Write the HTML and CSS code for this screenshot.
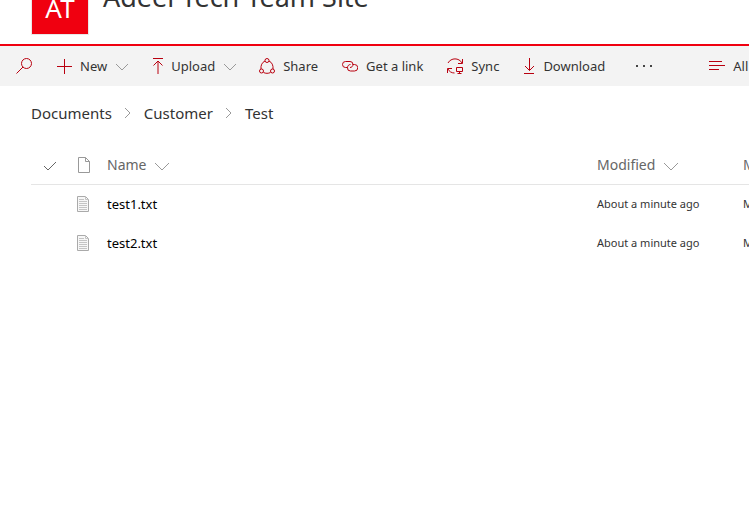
FILE: index.html
```html
<!DOCTYPE html>
<html lang="en">
<head>
<meta charset="utf-8">
<title>Adeel Tech Team Site</title>
<link rel="stylesheet" href="styles.css">
</head>
<body>
<header class="site-header">
  <div class="site-logo">AT</div>
  <h1 class="site-title">Adeel Tech Team Site</h1>
</header>
<nav class="command-bar" aria-label="Commands">
  <button class="command search" aria-label="Search"><svg class="icon" viewBox="0 0 16 16"><circle cx="10.5" cy="5.5" r="5"/><path d="M7 9 .5 15.500"/></svg></button>
  <button class="command new"><svg class="icon" viewBox="0 0 16 16"><path d="M8.500 1v15M1 8.500h15"/></svg>New<svg class="chevron small" viewBox="0 0 14 8"><path d="m1 1 6 6 6-6"/></svg></button>
  <button class="command upload"><svg class="icon arrow" viewBox="0 0 10 16"><path d="M0 .5h10M5 16V3M.5 7.500 5 3l4.500 4.500"/></svg>Upload<svg class="chevron small" viewBox="0 0 14 8"><path d="m1 1 6 6 6-6"/></svg></button>
  <button class="command share"><svg class="icon" viewBox="0 0 16 16"><circle cx="8" cy="2.500" r="2"/><circle cx="2.500" cy="13" r="2"/><circle cx="13.500" cy="13" r="2"/><path d="M6 3C3 4.300 1.600 7.500 2 11M10 3c3 1.300 4.400 4.500 4 8M4.500 14.500c2.200 1.100 4.800 1.100 7 0"/></svg>Share</button>
  <button class="command link"><svg class="icon" viewBox="0 0 16 16"><path d="M5.500 9.500h-2a3 3 0 0 1 0-6H8a3 3 0 0 1 3 3c0 1.700-1.300 3-3 3M10.500 6.500h2a3 3 0 0 1 0 6.500H8.500a3 3 0 0 1-3-3.300c0-1.800 1.200-3.200 3-3.200"/></svg>Get a link</button>
  <button class="command sync"><svg class="icon" viewBox="0 0 16 16"><path d="M1 5C4-.5 12-.5 15 5M15.500 1v4.500H11M.5 15v-4.500H5M1 11c1.200 2.500 3.500 4 6.500 4M9.500 9.500h6v4h-6zM12.500 13.500V15.500M10.500 15.500h4"/></svg>Sync</button>
  <button class="command download"><svg class="icon narrow" viewBox="0 0 12 16"><path d="M1 15.500h10M6.500 0v12.500M2 8l4.500 4.500L11 8"/></svg>Download</button>
  <button class="command more" aria-label="More"><svg class="dots" viewBox="0 0 18 2"><path d="M1 0h2v2H1zM8 0h2v2H8zM15 0h2v2h-2z"/></svg></button>
  <button class="command view"><svg class="icon" viewBox="0 0 16 16"><path d="M0 3.500h13M0 7.500h16M0 11.500h10"/></svg>All</button>
</nav>
<main class="library">
  <nav class="breadcrumb" aria-label="Breadcrumb">
    <a href="#">Documents</a>
    <svg class="crumb-arrow" viewBox="0 0 8 12"><path d="m1 1 5 5-5 5"/></svg>
    <a href="#">Customer</a>
    <svg class="crumb-arrow" viewBox="0 0 8 12"><path d="m1 1 5 5-5 5"/></svg>
    <a href="#">Test</a>
  </nav>
  <table class="files">
    <thead>
      <tr>
        <th class="check"><svg class="tick" viewBox="0 0 14 10"><path d="m1 5 4 4 8-8"/></svg></th>
        <th class="type"><svg class="page" viewBox="0 0 14 18"><path d="M1.500 1.500h7l4 4v11h-11zM8.500 1.500v4h4"/></svg></th>
        <th class="name">Name<svg class="chevron" viewBox="0 0 16 9"><path d="m1 1 7 7 7-7"/></svg></th>
        <th class="modified">Modified<svg class="chevron" viewBox="0 0 16 9"><path d="m1 1 7 7 7-7"/></svg></th>
        <th class="author">M</th>
      </tr>
    </thead>
    <tbody>
      <tr>
        <td></td>
        <td><svg class="text-file" viewBox="0 0 12 16"><path class="sheet" d="M.5.500h8l3 3v12H.5z"/><path class="lines" d="M8.500.5v3h3M2 3.500h5M2 5.500h8M2 7.500h8M2 9.500h8M2 11.500h8M2 13.500h8"/></svg></td>
        <td><a class="file" href="#">test1.txt</a></td>
        <td>About a minute ago</td>
        <td>M</td>
      </tr>
      <tr>
        <td></td>
        <td><svg class="text-file" viewBox="0 0 12 16"><path class="sheet" d="M.5.500h8l3 3v12H.5z"/><path class="lines" d="M8.500.5v3h3M2 3.500h5M2 5.500h8M2 7.500h8M2 9.500h8M2 11.500h8M2 13.500h8"/></svg></td>
        <td><a class="file" href="#">test2.txt</a></td>
        <td>About a minute ago</td>
        <td>M</td>
      </tr>
    </tbody>
  </table>
</main>
</body>
</html>
```

FILE: styles.css
```css
* { box-sizing: border-box; }
body {
  margin: 0;
  overflow: hidden;
  background: #fff;
  color: #333;
  font-family: "Noto Sans", "Liberation Sans", sans-serif;
}
svg { flex: none; fill: none; stroke-width: 1; }
a { color: inherit; text-decoration: none; }

.site-header {
  display: flex;
  align-items: flex-end;
  gap: 14px;
  height: 46px;
  padding: 0 31px 9px;
  border-bottom: 2px solid #f00010;
  overflow: hidden;
}
.site-logo {
  flex: none;
  width: 58px;
  height: 58px;
  border: 1px solid #e8e8e8;
  background: #f00010;
  color: #fff;
  font-size: 26px;
  line-height: 60px;
  text-align: center;
}
.site-title {
  margin: 0 0 20px;
  font-size: 27px;
  font-weight: 400;
  line-height: 36px;
  white-space: nowrap;
}

.command-bar {
  display: flex;
  height: 40px;
  padding-left: 16px;
  background: #f3f3f3;
  overflow: hidden;
}
.command {
  display: flex;
  flex: none;
  align-items: center;
  gap: 8px;
  margin: 0 24px 0 0;
  padding: 0;
  border: 0;
  background: none;
  color: #333;
  font: 13px/20px "Noto Sans", "Liberation Sans", sans-serif;
}
.icon { width: 16px; height: 16px; stroke: #b9000f; }
.arrow { width: 10px; }
.narrow { width: 12px; }
.dots { width: 18px; height: 2px; fill: #444; }
.upload { margin-right: 22px; }
.more { margin: 0 56px 0 6px; }
.chevron { width: 16px; height: 9px; margin-left: 8px; stroke: #999; }
.small { width: 14px; height: 8px; margin: 2px 0 0; }

.library { padding-left: 31px; }
.breadcrumb {
  display: flex;
  align-items: center;
  gap: 12px;
  padding-top: 15px;
  font-size: 15px;
  line-height: 24px;
}
.crumb-arrow { width: 8px; height: 12px; stroke: #999; }

.files {
  width: 100%;
  min-width: 718px;
  margin-top: 20px;
  border-collapse: collapse;
  table-layout: fixed;
  font-size: 11px;
  white-space: nowrap;
}
.files th {
  height: 39px;
  padding: 0;
  border-bottom: 1px solid #e5e5e5;
  color: #666;
  font-size: 14px;
  font-weight: 400;
  text-align: left;
}
.files td { height: 39px; padding: 0; }
.files svg { vertical-align: middle; }
.check { width: 44px; }
.type { width: 32px; }
.modified { width: 146px; }
.author { width: 6px; }
.tick { width: 14px; height: 10px; margin-left: 12px; stroke: #666; }
.page { width: 14px; height: 18px; margin-left: 2px; stroke: #999; }
.text-file { width: 12px; height: 16px; margin-left: 2px; }
.sheet { fill: #f7f7f7; stroke: #aaa; }
.lines { stroke: #c4c4c4; }
.file { color: #000; font-size: 13px; }
```
